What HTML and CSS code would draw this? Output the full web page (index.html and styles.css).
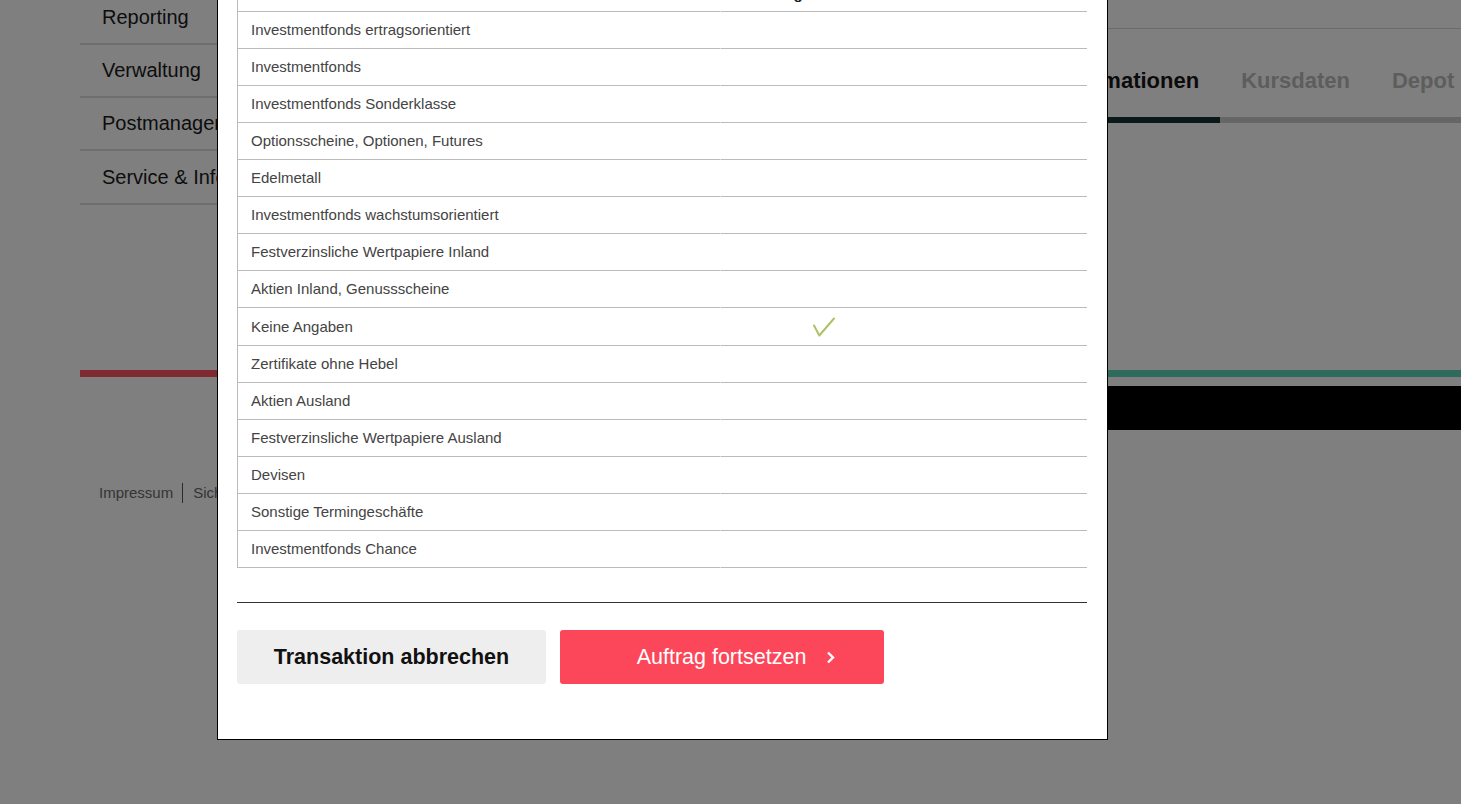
FILE: index.html
```html
<!doctype html>
<html>

  <head>
    <meta charset="utf-8">
    <meta name="viewport" content="width=device-width, initial-scale=1" />
    <title>Depot - Auftrag</title>
    <link rel="stylesheet" href="styles.css">
  </head>

  <body>

    <div class='page'>
      <div class='top'>
        <nav class='sidenav'>
          <a class='sidenav-link' href='#'>Reporting</a>
          <a class='sidenav-link' href='#'>Verwaltung</a>
          <a class='sidenav-link' href='#'>Postmanagement</a>
          <a class='sidenav-link' href='#'>Service &amp; Infos</a>
        </nav>

        <main class='main'>
          <div class='main-head'></div>
          <nav class='tabs'>
            <a class='tab' href='#'>Übersicht</a>
            <a class='tab tab-active' href='#'>Informationen</a>
            <a class='tab' href='#'>Kursdaten</a>
            <a class='tab' href='#'>Depot</a>
          </nav>
        </main>
      </div>

      <div class='accent-line'></div>
      <div class='black-bar'></div>

      <footer class='footer'>
        <a class='footer-link' href='#'>Impressum</a>
        <a class='footer-link' href='#'>Sicherheit</a>
        <a class='footer-link' href='#'>Datenschutz</a>
      </footer>
    </div>

    <div class='overlay'></div>

    <div class='modal'>
      <table class='classes'>
        <thead>
          <tr>
            <th>Produktklasse</th>
            <th>Erfahrung</th>
          </tr>
        </thead>
        <tbody>
          <tr><td>Investmentfonds ertragsorientiert</td><td></td></tr>
          <tr><td>Investmentfonds</td><td></td></tr>
          <tr><td>Investmentfonds Sonderklasse</td><td></td></tr>
          <tr><td>Optionsscheine, Optionen, Futures</td><td></td></tr>
          <tr><td>Edelmetall</td><td></td></tr>
          <tr><td>Investmentfonds wachstumsorientiert</td><td></td></tr>
          <tr><td>Festverzinsliche Wertpapiere Inland</td><td></td></tr>
          <tr><td>Aktien Inland, Genussscheine</td><td></td></tr>
          <tr>
            <td>Keine Angaben</td>
            <td class='check-cell'>
              <svg class='check' width='22' height='20' viewBox='0 0 22 20'>
                <path d='M1 8.5 L6.3 18.5 L21 1.5' fill='none' stroke='#aec163' stroke-width='2' stroke-linecap='round' stroke-linejoin='round' />
              </svg>
            </td>
          </tr>
          <tr><td>Zertifikate ohne Hebel</td><td></td></tr>
          <tr><td>Aktien Ausland</td><td></td></tr>
          <tr><td>Festverzinsliche Wertpapiere Ausland</td><td></td></tr>
          <tr><td>Devisen</td><td></td></tr>
          <tr><td>Sonstige Termingeschäfte</td><td></td></tr>
          <tr><td>Investmentfonds Chance</td><td></td></tr>
        </tbody>
      </table>

      <hr class='modal-rule'>

      <div class='modal-actions'>
        <button class='btn btn-cancel'>Transaktion abbrechen</button>
        <button class='btn btn-continue'>
          Auftrag fortsetzen
          <svg width='9' height='13' viewBox='0 0 9 13'>
            <path d='M2 1.5 L7 6.5 L2 11.5' fill='none' stroke='#fff' stroke-width='2.4' />
          </svg>
        </button>
      </div>
    </div>

  </body>

</html>
```

FILE: styles.css
```css
:root {
  --text-color: #1a1a1a;
  --line-color: #dddddd;
  --table-line: #bbbbbb;
  --red: #fc4659;
  --font: "Liberation Sans", Arial, sans-serif;
}

body {
  margin: 0;
  overflow: hidden;
  background: #fff;
  color: var(--text-color);
  font-family: var(--font);
}

a {
  color: inherit;
  text-decoration: none;
}

/* page behind the dialog */

.page {
  margin-top: -8px;
  margin-left: 80px;
}

.top {
  display: flex;
}

.sidenav {
  display: flex;
  flex-direction: column;
  width: 240px;
  flex-shrink: 0;
}

.sidenav-link {
  height: 51px;
  display: flex;
  align-items: center;
  padding-left: 22px;
  font-size: 20px;
  white-space: nowrap;
  border-bottom: 2px solid var(--line-color);
}

.sidenav-link:last-child {
  height: 52px;
}

.main {
  flex: 1;
  min-width: 0;
}

.main-head {
  height: 36px;
  border-bottom: 1px solid #d4d4d4;
}

.tabs {
  display: flex;
  margin-top: 28px;
  margin-left: 568px;
  white-space: nowrap;
}

.tab {
  flex-shrink: 0;
  padding: 11px 21px 23px;
  font-size: 22px;
  line-height: 26px;
  font-weight: bold;
  color: #bbbbbb;
  border-bottom: 6px solid #cccccc;
}

.tab-active {
  color: #161616;
  border-bottom-color: #143434;
}

.accent-line {
  margin-top: 165px;
  height: 7px;
  background: linear-gradient(to right, #ff5460 0 50%, #5cd6b8 50% 100%);
}

.black-bar {
  margin-top: 9px;
  margin-left: 240px;
  height: 44px;
  background: #000;
}

.footer {
  display: flex;
  margin-top: 53px;
  padding-left: 19px;
  font-size: 15px;
  line-height: 20px;
}

.footer-link {
  color: #6a6a6a;
  padding: 0 9px 0 10px;
}

.footer-link:first-child {
  padding-left: 0;
}

.footer-link + .footer-link {
  border-left: 1px solid #555;
}

/* dialog */

.overlay {
  position: fixed;
  inset: 0;
  background: rgba(0, 0, 0, 0.5);
}

.modal {
  position: fixed;
  left: 217px;
  top: -56px;
  width: 891px;
  box-sizing: border-box;
  padding: 20px 20px 55px 19px;
  background: #fff;
  border: 1px solid #000;
}

.classes {
  width: 850px;
  table-layout: fixed;
  border-collapse: separate;
  border-spacing: 0;
  font-size: 15px;
  line-height: 16px;
  color: #444;
}

.classes th,
.classes td {
  text-align: left;
  vertical-align: middle;
  border-bottom: 1px solid var(--table-line);
}

.classes th {
  padding: 21px 10px 9px;
  color: #222;
}

.classes td {
  padding: 10px;
}

.classes th:first-child,
.classes td:first-child {
  width: 483px;
  box-sizing: border-box;
  padding-left: 13px;
  border-left: 1px solid var(--table-line);
}

.classes th + th,
.classes td + td {
  border-left: 1px solid #fff;
}

.classes td.check-cell {
  padding: 9px 10px 8px 92px;
}

.check {
  display: block;
}

.modal-rule {
  border: 0;
  border-top: 1px solid #333;
  margin: 34px 0 27px;
}

.modal-actions {
  display: flex;
  gap: 14px;
}

.btn {
  height: 54px;
  border: 0;
  border-radius: 3px;
  font-family: var(--font);
  font-size: 21.5px;
  cursor: pointer;
}

.btn-cancel {
  width: 309px;
  background: #eeeeee;
  color: #111;
  font-weight: bold;
}

.btn-continue {
  width: 324px;
  display: flex;
  align-items: center;
  justify-content: center;
  gap: 20px;
  padding-left: 34px;
  background: var(--red);
  color: #fff;
}

.btn-continue svg {
  display: block;
}
```
